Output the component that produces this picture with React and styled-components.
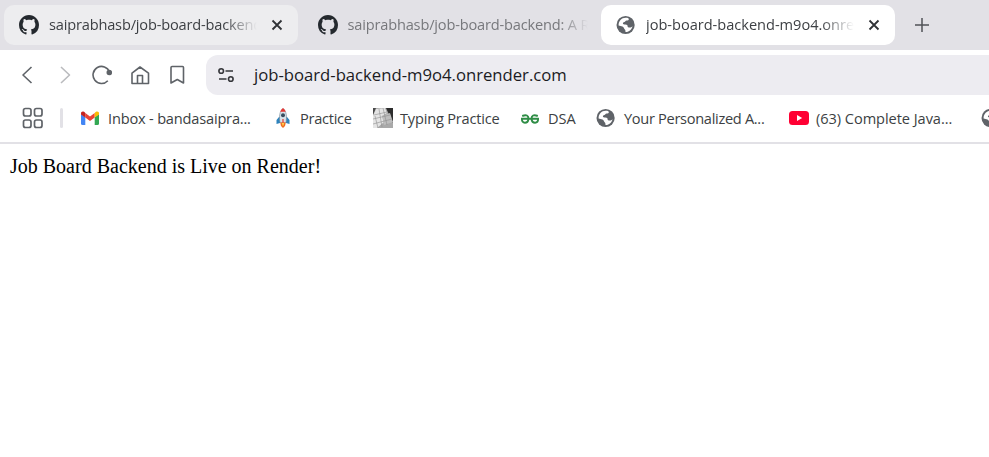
import React from 'react';
import styled, { createGlobalStyle } from 'styled-components';

const GlobalStyle = createGlobalStyle`
  * { box-sizing: border-box; }
  body { margin: 0; background: #fff; overflow: hidden; }
`;

const Browser = styled.div`
  width: 100%;
  height: 457px;
  overflow: hidden;
  background: #fff;
  font-family: "Open Sans", "Noto Sans", sans-serif;
  color: #3c3f43;
`;

const TabStrip = styled.div`
  height: 50px;
  padding: 5px 4px;
  display: flex;
  gap: 4.5px;
  background: #e2e1e6;
`;

const Tab = styled.div`
  width: 294px;
  height: 40px;
  flex: none;
  padding: 0 8px 0 15px;
  display: flex;
  align-items: center;
  border-radius: 10px;
  background: ${(p) => p.$bg};
  color: ${(p) => p.$color};
`;

const Title = styled.div`
  width: ${(p) => p.$w || 208}px;
  flex: none;
  margin: 0 0 2px 10px;
  overflow: hidden;
  white-space: nowrap;
  font-size: 14.6px;
  line-height: 24px;
  letter-spacing: ${(p) => p.$spacing}px;
  mask-image: linear-gradient(to right, #000 ${(p) => p.$solid || 84}%, transparent 100%);
`;

const Icon = styled.svg`
  display: block;
  flex: none;
  width: ${(p) => p.$w}px;
  height: ${(p) => p.$h || p.$w}px;
  margin-left: ${(p) => p.$ml || 0}px;
`;

const NewTabIcon = styled(Icon)`
  align-self: center;
`;

const Toolbar = styled.div`
  height: 50px;
  padding: 5px 0 0 17px;
  display: flex;
`;

const NavButtons = styled.div`
  width: 189px;
  height: 40px;
  display: flex;
  align-items: center;
`;

const AddressBar = styled.div`
  flex: 1;
  height: 40px;
  padding-left: 12px;
  display: flex;
  align-items: center;
  background: #edecf1;
  border-radius: 12px 0 0 12px;
`;

const Url = styled.div`
  margin-left: 20px;
  font-size: 16.7px;
  line-height: 24px;
  letter-spacing: -0.01px;
  color: #1b1b1f;
`;

const Bookmarks = styled.div`
  height: 44px;
  padding-bottom: 6px;
  display: flex;
  align-items: center;
  overflow: hidden;
  border-bottom: 2px solid #e2e1e6;
`;

const Divider = styled.div`
  width: 3px;
  height: 20px;
  flex: none;
  margin: 0 17px 0 17px;
  border-radius: 2px;
  background: #e2e1e6;
`;

const Bookmark = styled.div`
  width: ${(p) => p.$w}px;
  flex: none;
  display: flex;
  align-items: center;
  gap: ${(p) => p.$gap || 7}px;
`;

const BookmarkLabel = styled.span`
  font-size: 14.6px;
  line-height: 24px;
  white-space: nowrap;
  letter-spacing: ${(p) => p.$spacing || 0}px;
`;

const Page = styled.main`
  padding: 11px 10px;
  font-family: "Liberation Serif", serif;
  font-size: 20px;
  line-height: 23px;
  color: #000;
`;

const GitHub = () => (
  <Icon $w={20} viewBox="0 0 16 16">
    <path fill="#24292e" d="M8 0c4.42 0 8 3.58 8 8a8.013 8.013 0 0 1-5.45 7.59c-.4.08-.55-.17-.55-.38 0-.27.01-1.13.01-2.2 0-.75-.25-1.23-.54-1.48 1.78-.2 3.65-.88 3.65-3.95 0-.88-.31-1.59-.82-2.15.08-.2.36-1.02-.08-2.12 0 0-.67-.22-2.2.82-.64-.18-1.32-.27-2-.27-.68 0-1.36.09-2 .27-1.53-1.03-2.2-.82-2.2-.82-.44 1.1-.16 1.92-.08 2.12-.51.56-.82 1.28-.82 2.15 0 3.06 1.86 3.75 3.64 3.95-.23.2-.44.55-.51 1.07-.46.21-1.61.55-2.33-.66-.15-.24-.6-.83-1.23-.82-.67.01-.27.38.01.53.34.19.73.9.82 1.13.16.45.68 1.31 2.69.94 0 .67.01 1.3.01 1.49 0 .21-.15.45-.55.38A7.995 7.995 0 0 1 0 8c0-4.42 3.58-8 8-8Z" />
  </Icon>
);

const Globe = () => (
  <Icon $w={20} viewBox="0 0 20 20">
    <circle cx="9.6" cy="10" r="9.1" fill="#5f6368" />
    <path fill="#fff" d="M9.6 2.8C11.600 2.800 12.800 3.300 12.800 4.200c0 1-1 1.300-2.200 1.400-1.300.1-1.200 1.200-2.200 1.500-.9.3-1.500.6-1.500 1.400 0 .9 1.100.9 2.500.9 1.700 0 2.200.7 2.200 1.900 0 1.100.9 1.200 2 1.200 1.300 0 2.200-.6 2.900-1.300-.7 3.200-3.300 5.600-6.600 5.900-.5-.1-.5-.7-.5-1.300 0-1-1-1.200-1.300-2.200-.3-1.300-1.200-2.200-2.600-2.400L2.600 10.600C2.300 6.200 5.600 2.800 9.600 2.800Z" />
  </Icon>
);

const Close = () => (
  <Icon $w={12} $ml={14} viewBox="0 0 12 12" fill="none" stroke="#303236" strokeWidth="1.800">
    <path d="M1.500 1.500l9 9M10.500 1.500l-9 9" />
  </Icon>
);

const line = { fill: 'none', stroke: '#5f6368', strokeWidth: 1.6, strokeLinejoin: 'round' };

export default function App() {
  return (
    <Browser>
      <GlobalStyle />
      <TabStrip>
        <Tab $bg="#ededef" $color="#3c3f43">
          <GitHub />
          <Title $spacing={-0.18}>saiprabhasb/job-board-backend</Title>
          <Close />
        </Tab>
        <Tab $bg="transparent" $color="#77787c">
          <GitHub />
          <Title $w={240} $solid={88} $spacing={-0.18}>saiprabhasb/job-board-backend: A REST</Title>
        </Tab>
        <Tab $bg="#ffffff" $color="#3c3f43">
          <Globe />
          <Title $spacing={-0.02}>job-board-backend-m9o4.onrender.com</Title>
          <Close />
        </Tab>
        <NewTabIcon $w={14} $ml={15} viewBox="0 0 14 14" stroke="#505257" strokeWidth="1.5">
          <path d="M7 0v14M0 7h14" />
        </NewTabIcon>
      </TabStrip>

      <Toolbar>
        <NavButtons>
          <Icon $w={20} viewBox="0 0 20 20" {...line}><path d="M14.500 2L6 10l8.500 8" /></Icon>
          <Icon $w={20} $ml={18} viewBox="0 0 20 20" {...line} stroke="#babbbe"><path d="M6 2l8.500 8L6 18" /></Icon>
          <Icon $w={20} $ml={17} viewBox="0 0 20 20" {...line}>
            <path d="M15.800 15.700A8.500 8.500 0 1 1 17.500 7" />
            <circle cx="17.300" cy="7.500" r="2" fill="#5f6368" />
          </Icon>
          <Icon $w={20} $ml={18} viewBox="0 0 20 20" {...line}>
            <path d="M2 8.200L10 2l8.500 6.200V18.500H2ZM7.500 18v-7.500h5V18" />
          </Icon>
          <Icon $w={20} $ml={17} viewBox="0 0 20 20" {...line}>
            <path d="M4 2.600Q4 1.500 5 1.500H15.500Q16.500 1.500 16.500 2.600V18l-6.200-3.500L4 18Z" />
          </Icon>
        </NavButtons>
        <AddressBar>
          <Icon $w={16} viewBox="0 0 16 16" {...line} stroke="#35363a">
            <circle cx="3.200" cy="4" r="2.300" />
            <path d="M7.500 4H15M1 12h7.500" />
            <circle cx="12.800" cy="12" r="2.300" />
          </Icon>
          <Url>job-board-backend-m9o4.onrender.com</Url>
        </AddressBar>
      </Toolbar>

      <Bookmarks>
        <Icon $w={21} $h={22} $ml={22} viewBox="0 0 21 22" fill="none" stroke="#5f6368" strokeWidth="1.700">
          <rect x="1.500" y="1.500" width="7.500" height="7.500" rx="2" />
          <rect x="12.500" y="1.500" width="7.500" height="7.500" rx="2" />
          <rect x="1.500" y="13" width="7.500" height="7.500" rx="2" />
          <rect x="12.500" y="13" width="7.500" height="7.500" rx="2" />
        </Icon>
        <Divider />
        <Bookmark $w={193} $gap={8}>
          <Icon $w={20} viewBox="0 0 20 20">
            <path fill="#4285f4" d="M1 6l4.300 3.200v7.800H2.500Q1 17 1 15.500Z" />
            <path fill="#34a853" d="M19 6l-4.300 3.200v7.800h2.800Q19 17 19 15.500Z" />
            <path fill="#ea4335" d="M5.300 4.900L10 8.500l4.700-3.600v4.600L10 13 5.300 9.500Z" />
            <path fill="#c5221f" d="M1 5.400C1 3.200 3.400 2.700 5.300 4.900v4.600L1 6.400Z" />
            <path fill="#fbbc04" d="M19 5.400c0-2.200-2.400-2.700-4.300-.5v4.600L19 6.400Z" />
          </Icon>
          <BookmarkLabel $spacing={-0.19}>Inbox - bandasaipra...</BookmarkLabel>
        </Bookmark>
        <Bookmark $w={100}>
          <Icon $w={20} viewBox="0 0 20 20">
            <path fill="#2d83bd" d="M6 9l-2.500 3v4L7 15V9ZM14 9l2.500 3v4L13 15V9Z" />
            <path fill="#d8e2ea" stroke="#758796" strokeWidth=".6" d="M10 0.500C6.500 3.500 6 8 7 14.500h6C14 8 13.500 3.500 10 .5Z" />
            <path fill="#e53935" d="M10 0Q7.800 1.500 7.300 3.800h5.400Q12.200 1.500 10 0Z" />
            <circle cx="10" cy="7.200" r="2" fill="#394e60" />
            <path fill="#e53935" d="M9.400 11h1.200v4H9.400Z" />
            <path fill="#f26b21" d="M7.200 14.500h5.600L12 18l-2 2-2-2Z" />
            <path fill="#ffd54f" d="M8.700 15h2.600L10 18.500Z" />
          </Icon>
          <BookmarkLabel $spacing={-0.27}>Practice</BookmarkLabel>
        </Bookmark>
        <Bookmark $w={147}>
          <Icon $w={20} viewBox="0 0 20 20">
            <path fill="#a9a9a9" d="M0 0h20v20H0Z" />
            <path fill="#2d2d2d" d="M13 0h7v15Z" />
            <path fill="#4a4a4a" d="M0 0h3L0 7Z" />
            <path fill="#e4e4e4" d="M3 1l9-1 2 5-5 3 2 6-7 6H0V8Z" />
            <path fill="#bdbdbd" d="M9 8l8-3 3 9-9 3Z" />
            <path stroke="#8f8f8f" strokeWidth=".6" fill="none" d="M1 7l13-3M0 11l17-4M0 16l19-5M6 1l3 18M10 0l4 17M2 8l3 12" />
          </Icon>
          <BookmarkLabel $spacing={-0.2}>Typing Practice</BookmarkLabel>
        </Bookmark>
        <Bookmark $w={76} $gap={8}>
          <Icon $w={20} viewBox="0 0 20 20" fill="none" stroke="#2f8d46" strokeWidth="1.900">
            <path d="M1 10.700H19M2.200 8Q8.500 5.500 8.500 11Q8 14.700 4.900 14.700Q1.900 14.700 1.900 11M17.800 8Q11.500 5.500 11.500 11Q12 14.700 15.100 14.700Q18.100 14.700 18.100 11" />
          </Icon>
          <BookmarkLabel>DSA</BookmarkLabel>
        </Bookmark>
        <Bookmark $w={193} $gap={8}>
          <Globe />
          <BookmarkLabel $spacing={-0.31}>Your Personalized A...</BookmarkLabel>
        </Bookmark>
        <Bookmark $w={192}>
          <Icon $w={20} viewBox="0 0 20 20">
            <rect y="3" width="20" height="14" rx="3.500" fill="#ff0033" />
            <path fill="#fff" d="M8 7l5.200 3L8 13Z" />
          </Icon>
          <BookmarkLabel $spacing={-0.06}>(63) Complete Java...</BookmarkLabel>
        </Bookmark>
        <Globe />
      </Bookmarks>

      <Page>Job Board Backend is Live on Render!</Page>
    </Browser>
  );
}
